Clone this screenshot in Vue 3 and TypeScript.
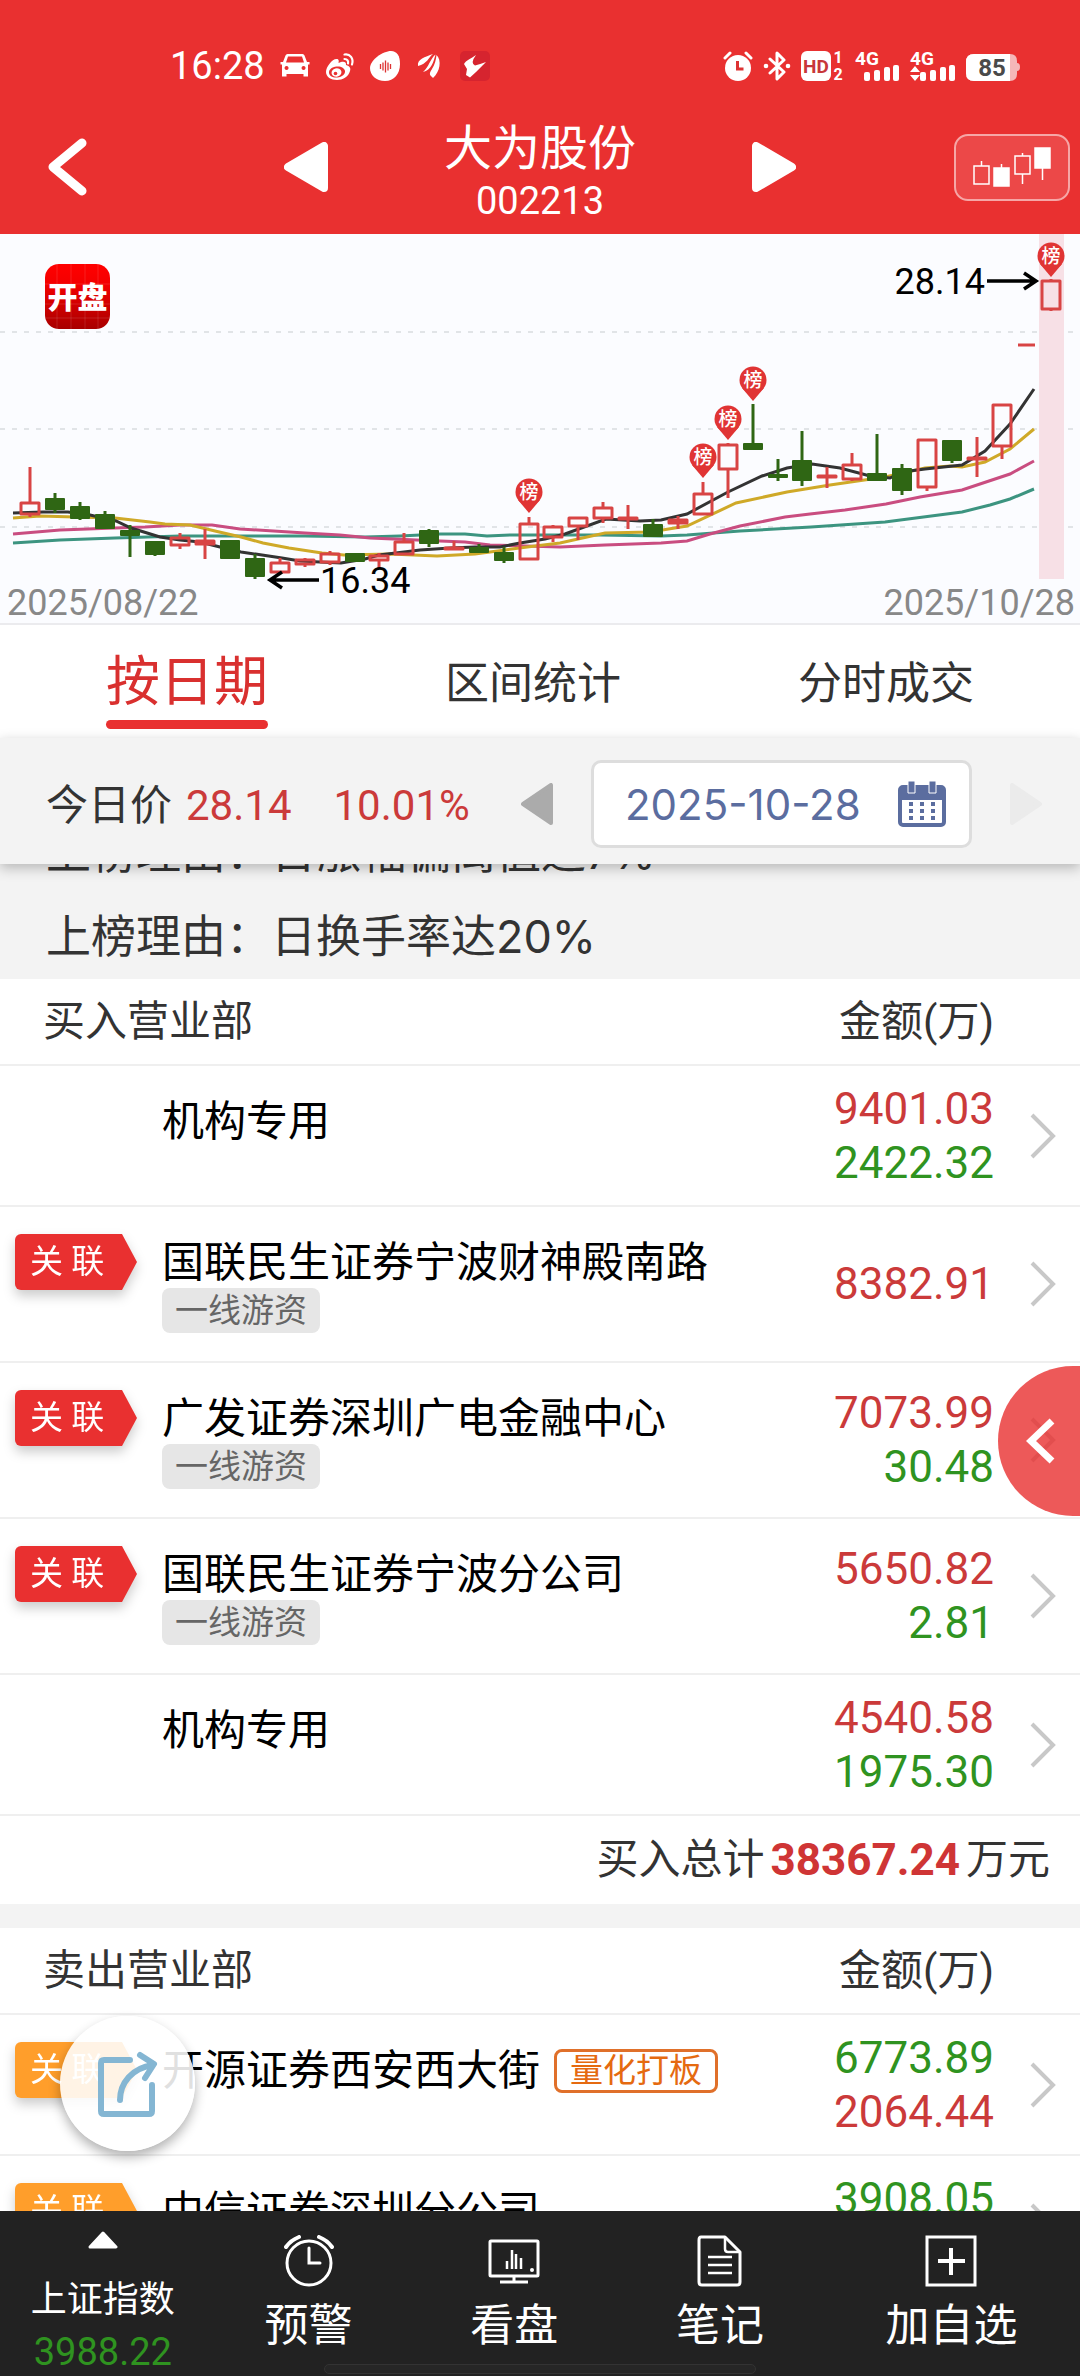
<script setup lang="ts">
import { onMounted, ref } from 'vue'

interface Candle {
  x: number
  high: number
  top: number
  bottom: number
  low: number
  up: boolean
}

interface Seat {
  name: string
  linked: boolean
  tag?: string
  label?: string
  first: string
  second?: string
}

type Row = [number, number, number, number, number, number]

// x, high, body top, body bottom, low, rising (1) or falling (0)
const rows: Row[] = [
  [30, 233, 268, 281, 283, 1], [55, 259, 264, 276, 279, 0], [80, 268, 272, 285, 286, 0],
  [105, 277, 280, 295, 295, 0], [130, 291, 296, 302, 323, 0], [155, 307, 307, 321, 322, 0],
  [180, 299, 303, 312, 315, 1], [205, 295, 306, 311, 325, 1], [230, 306, 306, 325, 325, 0],
  [255, 320, 324, 343, 345, 0], [280, 324, 328, 339, 340, 1], [305, 324, 325, 331, 333, 1],
  [330, 317, 319, 329, 331, 1], [355, 319, 319, 328, 328, 0], [379, 319, 321, 327, 334, 1],
  [404, 299, 307, 321, 321, 1], [429, 295, 296, 310, 313, 0], [454, 307, 313, 315, 315, 1],
  [479, 310, 313, 319, 319, 0], [504, 313, 318, 327, 329, 0], [529, 283, 289, 326, 326, 1],
  [553, 291, 292, 304, 308, 1], [578, 283, 283, 293, 306, 1], [603, 268, 273, 285, 289, 1],
  [628, 271, 283, 286, 295, 1], [653, 285, 290, 303, 303, 0], [678, 282, 285, 290, 295, 1],
  [703, 248, 259, 281, 281, 1], [728, 209, 210, 236, 264, 1], [753, 170, 209, 216, 216, 0],
  [778, 225, 240, 244, 247, 0], [802, 197, 226, 247, 252, 0], [827, 233, 241, 243, 254, 1],
  [852, 219, 230, 246, 247, 1], [877, 200, 239, 247, 247, 0], [902, 230, 234, 257, 261, 0],
  [927, 205, 205, 254, 257, 1], [952, 206, 206, 227, 229, 0], [977, 203, 223, 226, 243, 1],
  [1002, 170, 170, 213, 225, 1], [1051, 45, 46, 76, 77, 1],
]

const candles: Candle[] = rows.map(([x, high, top, bottom, low, up]) => ({
  x, high, top, bottom, low, up: up === 1,
}))

const averages = [
  { color: '#3c9480', points: '13,309 60,306 115,304 180,302 305,302 365,303 400,302 440,300 465,300 487,302 510,301 600,301 661,302 687,301 740,297 811,293 885,288 962,278 990,271 1010,265 1034,255' },
  { color: '#c94d80', points: '13,300 60,296 115,294 145,293 180,291 212,291 240,295 305,299 340,301 370,304 440,307 465,308 490,311 560,313 605,311 661,309 687,307 710,300 740,292 785,283 810,280 845,276 886,270 920,263 962,256 1010,240 1034,227' },
  { color: '#cfa928', points: '13,284 40,282 75,283 115,284 150,288 165,290 190,291 215,297 241,303 263,309 289,314 322,319 344,321 390,320 437,322 475,320 505,316 535,312 560,309 605,299 650,298 687,292 736,269 787,258 830,251 885,243 925,234 950,232 962,233 985,228 1010,215 1034,195' },
  { color: '#333333', points: '13,279 43,278 68,278 90,281 116,287 131,294 160,303 180,306 200,308 220,313 241,318 262,321 282,324 300,327 320,328 341,329 365,325 379,321 404,318 420,316 450,314 475,313 500,313 520,309 545,305 565,300 606,285 640,287 661,286 687,280 728,258 762,242 787,234 812,230 840,234 870,242 890,244 902,238 925,235 962,231 985,217 1010,190 1034,155' },
]

const pins = [
  { x: 529, y: 258 },
  { x: 703, y: 223 },
  { x: 728, y: 185 },
  { x: 753, y: 146 },
  { x: 1051, y: 22 },
]

const buySeats: Seat[] = [
  { name: '机构专用', linked: false, first: '9401.03', second: '2422.32' },
  { name: '国联民生证券宁波财神殿南路', linked: true, tag: '一线游资', first: '8382.91' },
  { name: '广发证券深圳广电金融中心', linked: true, tag: '一线游资', first: '7073.99', second: '30.48' },
  { name: '国联民生证券宁波分公司', linked: true, tag: '一线游资', first: '5650.82', second: '2.81' },
  { name: '机构专用', linked: false, first: '4540.58', second: '1975.30' },
]

const sellSeats: Seat[] = [
  { name: '开源证券西安西大街', linked: true, label: '量化打板', first: '6773.89', second: '2064.44' },
  { name: '中信证券深圳分公司', linked: true, first: '3908.05', second: '' },
]

const tabs = ['按日期', '区间统计', '分时成交']
const activeTab = ref(0)

const scroller = ref<HTMLElement | null>(null)
onMounted(() => {
  if (scroller.value) scroller.value.scrollTop = 53
})
</script>

<template>
  <div class="app">
    <header class="header">
      <div class="status">
        <div class="status-left">
          <span class="clock">16:28</span>
          <svg width="30" height="30" viewBox="0 0 30 30" fill="#fff">
            <path fill-rule="evenodd" d="M7.500 3h15q1.500 0 2 1.500L27 11h2.500v2.500H28V25.500h-4.500V23h-17v2.500H2V13.500H.5V11H3l2.500-6.500Q6 3 7.500 3zM8 5.500 6 11.500h18l-2-6zM6.500 15a2 2 0 1 0 .1 0zM23.500 15a2 2 0 1 0 .1 0z" />
          </svg>
          <svg width="30" height="30" viewBox="0 0 30 30">
            <path fill="#fff" fill-rule="evenodd" d="M1 21C1 16 7 8 11.500 8c2.500 0 2.500 2 2 4 4-2 8-2 7.500 2 4 1 5 3.500 4 6-1.500 6-7.500 9-13 9C6 29 1 26 1 21zM4 21.500c0 3.500 4 5.500 8.500 5s8-3.500 7.500-6.500-4-5-8.500-4.500S4 18.500 4 21.500z" />
            <ellipse cx="11.500" cy="21.500" rx="5" ry="4.200" fill="#fff" transform="rotate(-15 11.500 21.500)" />
            <circle cx="10.500" cy="22.500" r="1.800" fill="#e93030" />
            <path d="M19.500 3.500c5.500-1 9.500 4 7.500 10M19.500 8c3 0 4 2 3.500 4.500" fill="none" stroke="#fff" stroke-width="2.200" stroke-linecap="round" />
          </svg>
          <svg width="30" height="30" viewBox="0 0 30 30">
            <path fill="#fff" d="M21 0c6 0 9 5 9 13 0 10-6 17-15 17S0 24 0 17C0 9 13 0 21 0z" />
            <path d="M10.500 13v5M13 11.500v8M15.500 9.500v12M18 11.500v8M20.500 13v5" stroke="#d33" stroke-width="1.300" />
          </svg>
          <svg width="30" height="30" viewBox="0 0 30 30" fill="#fff">
            <path d="M3 15c-1-7 7-9 15-12C14 6 12 13 3 15z" />
            <path d="M8 21C14 16 15 8 20.500 3.500 18.500 11 16.500 19 8 21z" />
            <path d="M18 27c-2.500-3-5-3-1-9 3-5 4-9 4.500-14C27 9 25 21 18 27z" />
          </svg>
          <svg width="30" height="30" viewBox="0 0 30 30">
            <rect width="30" height="30" rx="5" fill="#d6242f" />
            <path fill="#fff" d="M16 4Q10 12 15 14.500 20 13 26 11L16 21 10 26.500 6 24 7 18 4 13C6 9 11 8 16 4z" />
          </svg>
        </div>
        <div class="status-right">
          <svg width="30" height="30" viewBox="0 0 30 30">
            <circle cx="15" cy="17" r="13" fill="#fff" />
            <path d="M2 7 7 2M28 7 23 2" stroke="#fff" stroke-width="3" stroke-linecap="round" />
            <path d="M14.500 10v8h6" fill="none" stroke="#d33" stroke-width="3" />
          </svg>
          <svg width="28" height="30" viewBox="0 0 28 30">
            <path d="m7 8 14 13-7 7V2l7 7L7 22" fill="none" stroke="#fff" stroke-width="3" stroke-linejoin="round" stroke-linecap="round" />
            <circle cx="3" cy="15" r="2.300" fill="#fff" />
            <circle cx="25" cy="15" r="2.300" fill="#fff" />
          </svg>
          <svg width="44" height="30" viewBox="0 0 44 30" class="status-text">
            <rect width="30" height="30" rx="6" fill="#fff" />
            <text x="15" y="22" text-anchor="middle" font-size="19" fill="#c8373a">HD</text>
            <text x="37" y="12" text-anchor="middle" font-size="16" fill="#fff">1</text>
            <text x="37" y="29" text-anchor="middle" font-size="16" fill="#fff">2</text>
          </svg>
          <svg width="45" height="30" viewBox="0 0 45 30" class="status-text">
            <text x="0" y="14" font-size="19" fill="#fff">4G</text>
            <g fill="#fff">
              <rect x="9" y="21" width="6" height="9" rx="2" />
              <rect x="19" y="19" width="6" height="11" rx="2" />
              <rect x="29" y="16" width="6" height="14" rx="2" />
              <rect x="38" y="14" width="6" height="16" rx="2" />
            </g>
          </svg>
          <svg width="46" height="30" viewBox="0 0 46 30" class="status-text">
            <text x="0" y="14" font-size="19" fill="#fff">4G</text>
            <g fill="#fff">
              <path d="m5 15 5 6H0zM5 30l5-6H0z" />
              <rect x="10" y="21" width="6" height="9" rx="2" />
              <rect x="20" y="19" width="6" height="11" rx="2" />
              <rect x="30" y="16" width="6" height="14" rx="2" />
              <rect x="39" y="14" width="6" height="16" rx="2" />
            </g>
          </svg>
          <svg width="54" height="30" viewBox="0 0 54 30" class="status-text">
            <path d="M8 3h36q7 0 7 7v2q3 0 3 4t-3 4v3q0 7-7 7H8q-8 0-8-8V11q0-8 8-8z" fill="#f5b7b8" />
            <path d="M8 3h36v27H8q-8 0-8-8V11q0-8 8-8z" fill="#fff" />
            <text x="26" y="25" text-anchor="middle" font-size="24" fill="#4a4a4a">85</text>
          </svg>
        </div>
      </div>
      <div class="nav">
        <div class="nav-left">
          <button type="button" class="plain" aria-label="返回">
            <svg width="39" height="58" viewBox="0 0 39 58">
              <path d="M34 5 5 29l29 24" fill="none" stroke="#fff" stroke-width="9" stroke-linecap="round" stroke-linejoin="round" />
            </svg>
          </button>
          <button type="button" class="plain" aria-label="上一只">
            <svg width="44" height="50" viewBox="0 0 44 50">
              <path d="M4 25 40 4v42z" fill="#fff" stroke="#fff" stroke-width="8" stroke-linejoin="round" />
            </svg>
          </button>
        </div>
        <div class="nav-title">
          <h1>大为股份</h1>
          <span>002213</span>
        </div>
        <div class="nav-right">
          <button type="button" class="plain" aria-label="下一只">
            <svg width="44" height="50" viewBox="0 0 44 50">
              <path d="M40 25 4 4v42z" fill="#fff" stroke="#fff" stroke-width="8" stroke-linejoin="round" />
            </svg>
          </button>
          <button type="button" class="kline" aria-label="K线">
            <svg width="80" height="42" viewBox="0 0 80 42" fill="none" stroke="#fff" stroke-width="1.500">
              <path d="M2 20h15v18H2zM9.500 20v-5M29.500 22v-4M43 10h15v18H43zM50.500 10V7M50.500 28v10M70.500 22v12" />
              <path d="M22 22h15v18H22zM63 2h15v20H63z" fill="#fff" />
            </svg>
          </button>
        </div>
      </div>
    </header>

    <section class="chart">
      <svg viewBox="0 0 1080 389" role="img" aria-label="K线走势">
        <defs>
          <linearGradient id="brand" x1="0" y1="0" x2="0" y2="1">
            <stop offset="0" stop-color="#ff0000" />
            <stop offset="0.300" stop-color="#f40000" />
            <stop offset="1" stop-color="#a80000" />
          </linearGradient>
        </defs>
        <g stroke="#d9dbe0" stroke-width="1.500" stroke-dasharray="5 7">
          <path d="M0 98H1080M0 195H1080M0 293H1080" />
        </g>
        <rect x="1039" y="0" width="25" height="345" fill="#f7e0e6" />
        <rect x="45" y="30" width="65" height="65" rx="14" fill="url(#brand)" />
        <path d="M45 50h65M45 70h65M45 84h65M57 30v65M71 30v65M85 30v65M98 30v65" stroke="#fff" stroke-opacity=".12" />
        <text x="77.500" y="74" text-anchor="middle" class="brand-text">开盘</text>
        <polyline v-for="line in averages" :key="line.color" :points="line.points" :stroke="line.color" fill="none" stroke-width="3" />
        <g v-for="c in candles" :key="c.x">
          <template v-if="c.up">
            <path :d="`M${c.x} ${c.high}V${c.top}M${c.x} ${c.bottom}V${c.low}`" stroke="#d84444" stroke-width="3" />
            <rect :x="c.x - 9" :y="c.top + 1" width="18" :height="Math.max(c.bottom - c.top - 2, 1)" fill="none" stroke="#d84444" stroke-width="3" stroke-linejoin="round" />
          </template>
          <template v-else>
            <path :d="`M${c.x} ${c.high}V${c.low}`" stroke="#2f6614" stroke-width="3" />
            <rect :x="c.x - 10" :y="c.top" width="20" :height="c.bottom - c.top" rx="1" fill="#2f6614" />
          </template>
        </g>
        <path d="M1018 111h17" stroke="#d84444" stroke-width="3" />
        <g v-for="p in pins" :key="p.x">
          <path :d="`M${p.x - 11} ${p.y + 8}L${p.x} ${p.y + 21}L${p.x + 11} ${p.y + 8}z`" fill="#e03434" />
          <circle :cx="p.x" :cy="p.y" r="13.500" fill="#e03434" />
          <text :x="p.x" :y="p.y + 7" text-anchor="middle" class="pin-text">榜</text>
        </g>
        <g fill="none" stroke="#000" stroke-width="3.500">
          <path d="M987 47h47M1024 39l12 8-12 8M319 346h-47M282 338l-12 8 12 8" />
        </g>
        <text x="985" y="60" text-anchor="end" class="price-text">28.14</text>
        <text x="320" y="359" class="price-text">16.34</text>
        <text x="7" y="381" class="date-text">2025/08/22</text>
        <text x="1075" y="381" text-anchor="end" class="date-text">2025/10/28</text>
      </svg>
    </section>

    <nav class="tabs">
      <button
        v-for="(tab, i) in tabs"
        :key="tab"
        type="button"
        class="tab"
        :class="{ active: i === activeTab }"
        @click="activeTab = i"
      >{{ tab }}</button>
    </nav>

    <section class="filter">
      <div class="today">
        <span>今日价</span>
        <span class="red">28.14</span>
        <span class="red change">10.01%</span>
      </div>
      <div class="picker">
        <button type="button" class="plain" aria-label="前一天">
          <svg width="32" height="42" viewBox="0 0 32 42">
            <path d="M2 21 30 2v38z" fill="#ababab" stroke="#ababab" stroke-width="4" stroke-linejoin="round" />
          </svg>
        </button>
        <button type="button" class="date">
          <span>2025-10-28</span>
          <svg width="48" height="46" viewBox="0 0 48 46">
            <rect x="2" y="6" width="44" height="38" rx="3" fill="#fff" stroke="#5b6d9f" stroke-width="4" />
            <path d="M2 6h44v13H2z" fill="#5b6d9f" />
            <path d="M10 0h7v12h-7zM31 0h7v12h-7z" fill="#5b6d9f" stroke="#fff" stroke-width="1" />
            <path d="M13 21v18M24 21v18M35 21v18" stroke="#5b6d9f" stroke-width="4" stroke-dasharray="4 3" />
          </svg>
        </button>
        <button type="button" class="plain" aria-label="后一天" disabled>
          <svg width="32" height="42" viewBox="0 0 32 42">
            <path d="M30 21 2 2v38z" fill="#ebebeb" stroke="#ebebeb" stroke-width="4" stroke-linejoin="round" />
          </svg>
        </button>
      </div>
    </section>

    <main ref="scroller" class="content">
      <div class="reasons">
        <p>上榜理由：日涨幅偏离值达7%</p>
        <p>上榜理由：日换手率达20%</p>
      </div>

      <table class="seats buy">
        <thead>
          <tr>
            <th colspan="2" scope="col">买入营业部</th>
            <th scope="col" class="amount">金额(万)</th>
            <td class="more"></td>
          </tr>
        </thead>
        <tbody>
          <tr v-for="(seat, i) in buySeats" :key="i">
            <td class="mark"><span v-if="seat.linked" class="badge"><span>关 联</span></span></td>
            <td class="name">
              <div class="name-line"><span class="seat-name">{{ seat.name }}</span></div>
              <span v-if="seat.tag" class="tag">{{ seat.tag }}</span>
            </td>
            <td class="amount">
              <div class="first">{{ seat.first }}</div>
              <div v-if="seat.second !== undefined" class="second">{{ seat.second }}</div>
            </td>
            <td class="more">
              <svg width="26" height="46" viewBox="0 0 26 46"><path d="m2 2 21 21L2 44" fill="none" stroke="#c8c8c8" stroke-width="4" /></svg>
            </td>
          </tr>
        </tbody>
      </table>
      <p class="total">买入总计<strong>38367.24</strong>万元</p>

      <table class="seats sell">
        <thead>
          <tr>
            <th colspan="2" scope="col">卖出营业部</th>
            <th scope="col" class="amount">金额(万)</th>
            <td class="more"></td>
          </tr>
        </thead>
        <tbody>
          <tr v-for="(seat, i) in sellSeats" :key="i">
            <td class="mark"><span v-if="seat.linked" class="badge"><span>关 联</span></span></td>
            <td class="name">
              <div class="name-line">
                <span class="seat-name">{{ seat.name }}</span>
                <span v-if="seat.label" class="label">{{ seat.label }}</span>
              </div>
            </td>
            <td class="amount">
              <div class="first">{{ seat.first }}</div>
              <div v-if="seat.second !== undefined" class="second">{{ seat.second }}</div>
            </td>
            <td class="more">
              <svg width="26" height="46" viewBox="0 0 26 46"><path d="m2 2 21 21L2 44" fill="none" stroke="#c8c8c8" stroke-width="4" /></svg>
            </td>
          </tr>
        </tbody>
      </table>
    </main>

    <footer class="bottom">
      <button type="button" class="item index">
        <svg width="30" height="18" viewBox="0 0 30 18"><path d="M15 2 28 16H2z" fill="#fff" stroke="#fff" stroke-width="3" stroke-linejoin="round" /></svg>
        <span>上证指数</span>
        <span class="value">3988.22</span>
      </button>
      <button type="button" class="item">
        <svg width="52" height="52" viewBox="0 0 52 52" fill="none" stroke="#fff" stroke-width="3" stroke-linecap="round">
          <circle cx="26" cy="28" r="22" />
          <path d="M26 13v15h11" />
          <path d="M3 12Q8 5 16 2M49 12Q44 5 36 2" stroke-width="4" />
        </svg>
        <span>预警</span>
      </button>
      <button type="button" class="item">
        <svg width="52" height="52" viewBox="0 0 52 52" fill="none" stroke="#fff" stroke-width="3">
          <rect x="2" y="6" width="48" height="35" rx="1" />
          <path d="M26 41v6M12 47h28" />
          <path d="M19 26v8M24 15v19M28 19v15M33 23v11" stroke-width="2.500" />
          <circle cx="44" cy="35" r="2" fill="#fff" stroke="none" />
        </svg>
        <span>看盘</span>
      </button>
      <button type="button" class="item">
        <svg width="52" height="52" viewBox="0 0 52 52" fill="none" stroke="#fff" stroke-width="3" stroke-linejoin="round">
          <path d="M7 2h24l15 15v30q0 3-3 3H8q-3 0-3-3V5q0-3 2-3z" />
          <path d="M31 3v11q0 3 3 3h11M14 22h24M14 30h24M14 38h24" stroke-width="2.500" />
        </svg>
        <span>笔记</span>
      </button>
      <button type="button" class="item wide">
        <svg width="52" height="52" viewBox="0 0 52 52" fill="none" stroke="#fff">
          <rect x="2" y="2" width="48" height="48" stroke-width="3" />
          <path d="M26 13v27M13 26h27" stroke-width="4" />
        </svg>
        <span>加自选</span>
      </button>
      <i class="home"></i>
    </footer>

    <button type="button" class="drawer" aria-label="展开">
      <svg width="30" height="46" viewBox="0 0 30 46"><path d="M26 3 5 23l21 20" fill="none" stroke="#fff" stroke-width="7" /></svg>
    </button>
    <button type="button" class="share" aria-label="分享">
      <svg width="60" height="66" viewBox="0 0 60 66" fill="none" stroke="#84b6d3" stroke-width="6" stroke-linecap="round" stroke-linejoin="round">
        <path d="M32 9H6q-3 0-3 3v48q0 3 3 3h45q3 0 3-3V34" />
        <path d="M22 49C22 32 34 17 55 14M42 4l14 9-9 14" />
      </svg>
    </button>
  </div>
</template>

<style>
body {
  margin: 0;
}
</style>

<style scoped>
.app {
  height: 100vh;
  display: flex;
  flex-direction: column;
  overflow: hidden;
  background: #fff;
  color: #333;
  font-family: Roboto, "Noto Sans CJK SC", sans-serif;
  font-size: 42px;
  font-weight: 400;
}

svg {
  display: block;
}

button {
  border: 0;
  padding: 0;
  background: none;
  color: inherit;
  font: inherit;
}

h1,
p {
  margin: 0;
  font-weight: inherit;
}

.header {
  background: #e93030;
  color: #fff;
}

.status {
  height: 68px;
  padding: 32px 60px 0 170px;
  display: flex;
  justify-content: space-between;
  align-items: center;
}

.status-left {
  display: flex;
  align-items: center;
  gap: 15px;
}

.status-right {
  display: flex;
  align-items: center;
  gap: 10px;
}

.clock {
  font-size: 38px;
}

.status-text {
  overflow: visible;
  font-weight: 700;
}

.nav {
  height: 134px;
  display: grid;
  grid-template-columns: 1fr 424px 1fr;
  align-items: center;
}

.nav-left,
.nav-right {
  display: flex;
  align-items: center;
  justify-content: space-between;
}

.nav-left {
  padding-left: 48px;
}

.nav-right {
  padding-right: 10px;
}

.nav-title {
  padding-top: 8px;
  display: flex;
  flex-direction: column;
  align-items: center;
}

.nav-title h1 {
  font-size: 48px;
  line-height: 60px;
}

.nav-title span {
  font-size: 38px;
  line-height: 44px;
}

.kline {
  width: 116px;
  height: 67px;
  display: flex;
  align-items: center;
  justify-content: center;
  border: 2px solid #f6a6a6;
  border-radius: 14px;
  background: #ec4848;
}

.chart {
  background: #fbfcff;
  border-bottom: 2px solid #ebebee;
}

.chart svg {
  width: 100%;
  height: auto;
}

.brand-text {
  font-size: 30px;
  font-weight: 900;
  fill: #fff;
}

.pin-text {
  font-size: 19px;
  font-weight: 500;
  fill: #fff;
}

.price-text {
  font-size: 36px;
  fill: #000;
}

.date-text {
  font-size: 36px;
  fill: #888;
}

.tabs {
  height: 113px;
  padding: 0 106px;
  display: flex;
  justify-content: space-between;
  align-items: flex-start;
}

.tab {
  position: relative;
  height: 104px;
  padding-top: 5px;
  font-size: 44px;
}

.tab.active {
  padding-top: 0;
  color: #d9302f;
  font-size: 54px;
}

.tab.active::after {
  content: "";
  position: absolute;
  left: 0;
  right: 0;
  bottom: 0;
  height: 9px;
  border-radius: 5px;
  background: #e93030;
}

.filter {
  position: relative;
  z-index: 1;
  height: 126px;
  padding: 0 38px 0 46px;
  display: flex;
  align-items: center;
  justify-content: space-between;
  background: #f3f3f3;
  box-shadow: 0 4px 12px rgba(0, 0, 0, 0.25);
}

.today {
  display: flex;
  align-items: baseline;
  gap: 14px;
}

.change {
  margin-left: 28px;
}

.red {
  color: #cb3a3a;
}

.picker {
  padding-top: 6px;
  display: flex;
  align-items: center;
  gap: 38px;
}

.date {
  width: 381px;
  height: 88px;
  padding: 0 23px 0 31px;
  display: flex;
  align-items: center;
  justify-content: space-between;
  border: 3px solid #ddd;
  border-radius: 10px;
  background: #fff;
  color: #5b6d9f;
  font-family: Inter, sans-serif;
}

.content {
  flex: 1;
  min-height: 0;
  overflow-y: auto;
  scrollbar-width: none;
}

.reasons {
  padding-left: 46px;
  background: #f3f3f3;
  font-family: Inter, "Noto Sans CJK SC", sans-serif;
  font-size: 45px;
  line-height: 84px;
}

.seats {
  width: 100%;
  border-collapse: collapse;
}

.seats tr {
  border-bottom: 2px solid #efefef;
}

.seats th,
.seats td {
  padding: 0;
}

.seats thead th {
  height: 77px;
  padding: 0 0 8px 43px;
  font-weight: 400;
  text-align: left;
}

.seats tbody tr {
  height: 141px;
}

.seats .mark {
  width: 147px;
  padding: 27px 0 0 15px;
  vertical-align: top;
}

.badge {
  display: block;
  filter: drop-shadow(0 6px 6px rgba(0, 0, 0, 0.2));
}

.badge span {
  display: block;
  width: 122px;
  padding-left: 15px;
  box-sizing: border-box;
  border-radius: 6px;
  background: #e93030;
  color: #fff;
  font-size: 33px;
  line-height: 56px;
  clip-path: polygon(0 0, 107px 0, 100% 50%, 107px 100%, 0 100%);
}

.sell .badge span {
  background: #ff9e2b;
}

.seats .name {
  padding: 30px 0 28px;
  color: #000;
  vertical-align: top;
}

.name-line {
  display: flex;
  align-items: center;
  height: 51px;
  white-space: nowrap;
}

.seat-name {
  padding-bottom: 8px;
}

.tag {
  display: block;
  width: max-content;
  padding: 0 13px;
  border-radius: 8px;
  background: #e6e6e6;
  color: #666;
  font-size: 33px;
  line-height: 45px;
}

.label {
  margin-left: 14px;
  padding: 0 13px;
  border: 3px solid #e0702a;
  border-radius: 8px;
  color: #e56a10;
  font-size: 33px;
  line-height: 38px;
}

.seats .amount {
  width: 240px;
  padding-left: 0;
  text-align: right;
  vertical-align: middle;
}

.amount div {
  font-size: 44px;
  line-height: 54px;
  min-height: 54px;
}

.buy .first,
.sell .second {
  color: #cb3a3a;
}

.buy .second,
.sell .first {
  color: #2f9320;
}

.seats .more {
  width: 50px;
  padding-left: 36px;
  vertical-align: middle;
}

.total {
  display: flex;
  justify-content: flex-end;
  gap: 6px;
  padding-right: 30px;
  line-height: 88px;
  border-bottom: 24px solid #f3f3f3;
}

.total strong {
  color: #cf3535;
  font-size: 44px;
}

.bottom {
  position: relative;
  height: 165px;
  display: flex;
  background: #222;
  color: #fff;
}

.item {
  flex: 4 1 0;
  padding-top: 24px;
  display: flex;
  flex-direction: column;
  align-items: center;
  justify-content: flex-start;
  gap: 10px;
  font-size: 44px;
  line-height: 58px;
}

.item.wide {
  flex-grow: 5;
}

.item.index {
  padding-top: 20px;
  gap: 0;
  font-size: 36px;
}

.item.index svg {
  margin-bottom: 22px;
}

.item.index .value {
  color: #2f9320;
  font-size: 38px;
  line-height: 46px;
}

.home {
  position: absolute;
  bottom: 2px;
  left: 30%;
  right: 30%;
  height: 8px;
  border: 1px solid #333;
  border-radius: 5px;
  background: #262626;
}

.drawer {
  position: fixed;
  right: 0;
  bottom: 860px;
  width: 82px;
  height: 150px;
  padding-left: 28px;
  border-radius: 75px 0 0 75px;
  background: rgba(233, 48, 48, 0.8);
}

.share {
  position: fixed;
  left: 60px;
  bottom: 225px;
  width: 135px;
  height: 135px;
  display: flex;
  align-items: center;
  justify-content: center;
  border-radius: 50%;
  background: rgba(255, 255, 255, 0.88);
  box-shadow: 0 6px 12px rgba(0, 0, 0, 0.3);
}
</style>
